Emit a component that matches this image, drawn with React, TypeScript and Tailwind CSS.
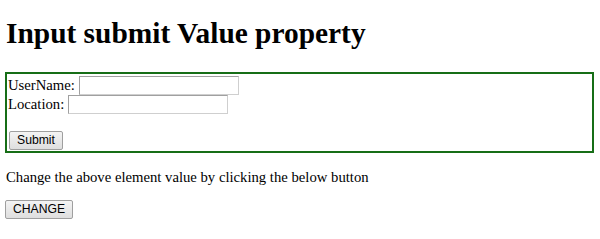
export default function App() {
  const inputClass =
    "h-[19px] w-[160px] border border-t-[#a0a0a0] border-l-[#a0a0a0] border-r-[#cfcfcf] border-b-[#cfcfcf] bg-white outline-none";
  const buttonClass =
    "h-[19px] rounded-[2px] border border-[#9f9f9f] bg-gradient-to-b from-[#f4f4f4] to-[#dedede] px-[7px] font-['Liberation_Sans',Arial,sans-serif] text-[12.2px] leading-[17px] text-black";

  return (
    <div className="min-h-[239px] bg-white pl-[5px] pr-[6px] font-['Liberation_Serif','Times_New_Roman',serif] text-[14.7px] leading-[17px] text-black">
      <h1 className="pl-[1px] pt-[17px] text-[29.4px] font-bold leading-[32px]">Input submit Value property</h1>

      <form className="mt-[23px] flex flex-col items-start border-2 border-[#176e17] pb-[1px] pl-[1px] pt-[2px]">
        <div className="flex h-[19px] items-center gap-[4px]">
          <span>UserName:</span>
          <input className={inputClass} type="text" />
        </div>
        <div className="flex h-[19px] items-center gap-[4px]">
          <span>Location:</span>
          <input className={inputClass} type="text" />
        </div>
        <div className="h-[17px]" />
        <button className={`${buttonClass} ml-px`} type="submit">
          Submit
        </button>
      </form>

      <p className="mt-[16px] pl-[1px]">Change the above element value by clicking the below button</p>

      <button className={`${buttonClass} mt-[14px]`} type="button">
        CHANGE
      </button>
    </div>
  );
}
